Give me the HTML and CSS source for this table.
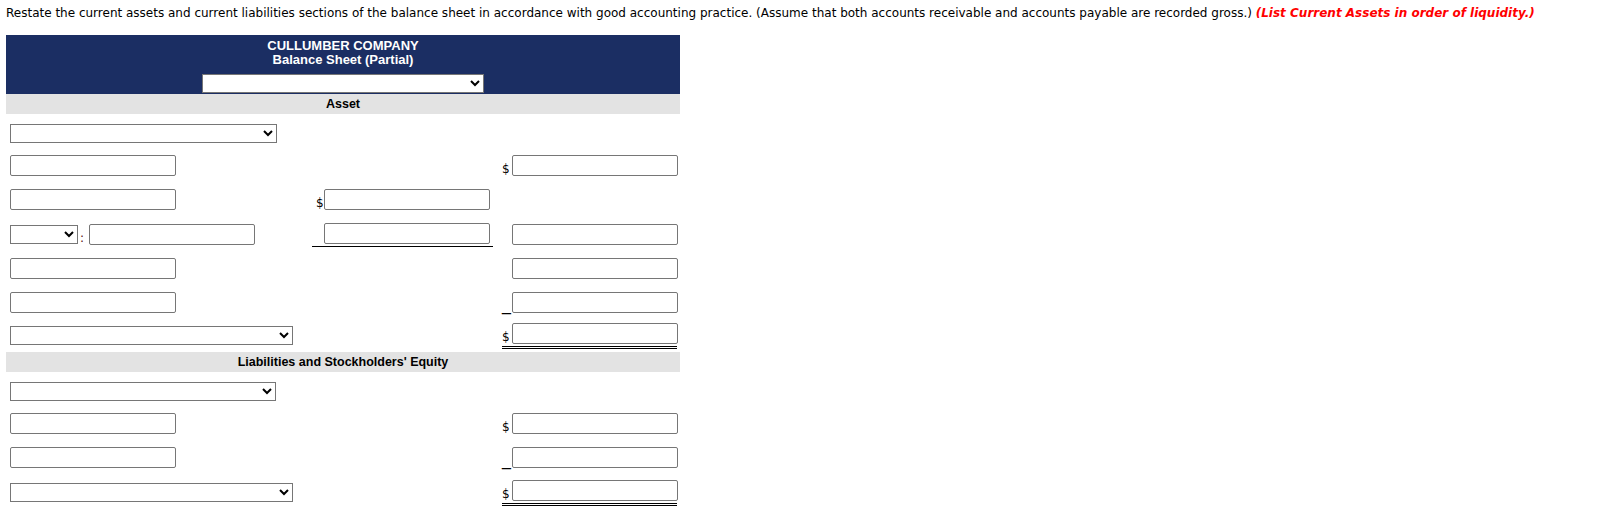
FILE: index.html
```html
<!DOCTYPE html>
<html>
<head>
<meta charset="utf-8">
<title>Balance Sheet (Partial)</title>
<link rel="stylesheet" href="styles.css">
</head>
<body>
<div class="page">
  <p class="prompt">Restate the current assets and current liabilities sections of the balance sheet in accordance with good accounting practice. (Assume that both accounts receivable and accounts payable are recorded gross.) <em class="hint">(List Current Assets in order of liquidity.)</em></p>

  <div class="sheet">
    <div class="sheet-head">
      <div class="co">CULLUMBER COMPANY</div>
      <div class="title">Balance Sheet (Partial)</div>
      <select class="sel sel-date"><option></option></select>
    </div>

    <div class="band">Asset</div>
    <div class="body body-a">
      <div class="row h31">
        <div class="c1"><select class="sel sel-lg"><option></option></select></div>
        <div class="c2"></div>
        <div class="c3"></div>
      </div>
      <div class="row h33">
        <div class="c1"><input class="in" type="text"></div>
        <div class="c2"></div>
        <div class="c3"><div class="amt"><span class="sign">$</span><input class="in" type="text"></div></div>
      </div>
      <div class="row h35">
        <div class="c1"><input class="in" type="text"></div>
        <div class="c2"><span class="sign">$</span><input class="in" type="text"></div>
        <div class="c3"></div>
      </div>
      <div class="row h35">
        <div class="c1"><select class="sel sel-sm"><option></option></select><span class="colon">:</span><input class="in" type="text"></div>
        <div class="c2 u"><span class="sign"></span><input class="in" type="text"></div>
        <div class="c3"><div class="amt"><span class="sign"></span><input class="in" type="text"></div></div>
      </div>
      <div class="row h33">
        <div class="c1"><input class="in" type="text"></div>
        <div class="c2"></div>
        <div class="c3"><div class="amt"><span class="sign"></span><input class="in" type="text"></div></div>
      </div>
      <div class="row h34">
        <div class="c1"><input class="in" type="text"></div>
        <div class="c2"></div>
        <div class="c3"><div class="amt"><span class="sign us">_</span><input class="in" type="text"></div></div>
      </div>
      <div class="row h33">
        <div class="c1"><select class="sel sel-tot"><option></option></select></div>
        <div class="c2"></div>
        <div class="c3"><div class="amt dbl"><span class="sign">$</span><input class="in" type="text"></div></div>
      </div>
    </div>

    <div class="band">Liabilities and Stockholders' Equity</div>
    <div class="body body-l">
      <div class="row h32">
        <div class="c1"><select class="sel sel-md"><option></option></select></div>
        <div class="c2"></div>
        <div class="c3"></div>
      </div>
      <div class="row h33">
        <div class="c1"><input class="in" type="text"></div>
        <div class="c2"></div>
        <div class="c3"><div class="amt"><span class="sign">$</span><input class="in" type="text"></div></div>
      </div>
      <div class="row h35">
        <div class="c1"><input class="in" type="text"></div>
        <div class="c2"></div>
        <div class="c3"><div class="amt"><span class="sign us">_</span><input class="in" type="text"></div></div>
      </div>
      <div class="row h35">
        <div class="c1"><select class="sel sel-tot"><option></option></select></div>
        <div class="c2"></div>
        <div class="c3"><div class="amt dbl"><span class="sign">$</span><input class="in" type="text"></div></div>
      </div>
    </div>
  </div>
</div>
</body>
</html>
```

FILE: styles.css
```css
* {
  box-sizing: border-box;
}

body {
  margin: 0;
  background: #fff;
  color: #000;
  font-family: "DejaVu Sans", Verdana, sans-serif;
  font-size: 12px;
}

.page {
  padding: 5px 6px 0;
}

.prompt {
  margin: 0;
  height: 30px;
  line-height: 16px;
  white-space: nowrap;
}

.hint {
  color: #f00;
  font-weight: bold;
  font-style: italic;
}

.sheet {
  width: 674px;
}

.sheet-head {
  background: #1b2e63;
  color: #fff;
  text-align: center;
  padding: 4px 0 1px;
  font: bold 13px/14px "Liberation Sans", Arial, sans-serif;
}

.sel {
  height: 19px;
  font: 13px "Liberation Sans", Arial, sans-serif;
  background: #fff;
  color: #000;
}

.sel-date {
  display: block;
  width: 282px;
  margin: 7px auto 0;
}

.sel-lg { width: 267px; }
.sel-md { width: 266px; }
.sel-tot { width: 283px; }
.sel-sm { width: 68px; }

.band {
  background: #e3e3e3;
  height: 20px;
  text-align: center;
  font: bold 12.5px/20px "Liberation Sans", Arial, sans-serif;
}

.body-a { padding-top: 4px; }
.body-l { padding-top: 3px; }

.row {
  display: grid;
  grid-template-columns: 306px 181px 187px;
  align-items: center;
}

.h31 { height: 31px; }
.h32 { height: 32px; }
.h33 { height: 33px; }
.h34 { height: 34px; }
.h35 { height: 35px; }

.c1 {
  display: flex;
  align-items: center;
  padding-left: 4px;
}

.c2 {
  display: flex;
  align-items: flex-end;
  padding-left: 4px;
}

.c2.u {
  border-bottom: 1px solid #000;
  padding-bottom: 2px;
}

.c3 {
  padding-left: 9px;
}

.amt {
  display: flex;
  align-items: flex-end;
  width: 175px;
}

.amt.dbl {
  border-bottom: 3px double #000;
  padding-bottom: 2px;
}

.sign {
  flex: none;
  width: 8px;
  font: 12px/14px "DejaVu Sans", Verdana, sans-serif;
}

.amt .sign {
  width: 10px;
}

.amt .sign.us {
  font: 16px/14px "Liberation Sans", Arial, sans-serif;
  overflow: visible;
}

.colon {
  flex: none;
  width: 11px;
  padding-left: 2px;
  align-self: flex-end;
  color: #5a1010;
  font: 12px/14px "DejaVu Sans", Verdana, sans-serif;
}

.in {
  flex: none;
  width: 166px;
  height: 21px;
  margin: 0;
  padding: 1px 2px;
  border: 1px solid #767676;
  border-radius: 2px;
  background: #fff;
  font: 13px "Liberation Sans", Arial, sans-serif;
}
```
